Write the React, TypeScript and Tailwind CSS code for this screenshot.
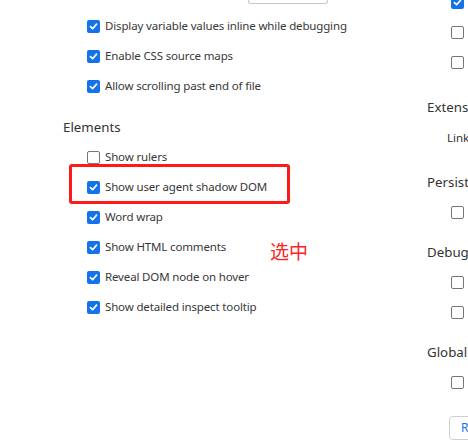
import React from "react";

function Box({ checked }: { checked: boolean }) {
  if (checked) {
    return (
      <span className="flex h-[13px] w-[13px] shrink-0 items-center justify-center rounded-[2px] bg-[#1273eb]">
        <svg width="9" height="9" viewBox="0 0 10 10">
          <path d="M1.6 5.2 L4 7.5 L8.4 2.4" fill="none" stroke="white" strokeWidth="1.9" strokeLinecap="round" strokeLinejoin="round" />
        </svg>
      </span>
    );
  }
  return <span className="h-[13px] w-[13px] shrink-0 rounded-[2px] border border-[#767676] bg-white" />;
}

function Row({ checked, label, children }: { checked: boolean; label: string; children?: React.ReactNode }) {
  return (
    <div className="relative flex h-[30px] items-center gap-[5px] pl-[24px]">
      <Box checked={checked} />
      <span className="text-[11.5px] tracking-[-0.15px] text-[#383838]">{label}</span>
      {children}
    </div>
  );
}

function RBox({ checked }: { checked: boolean }) {
  return (
    <div className="flex h-[30px] items-center pl-[24px]">
      <Box checked={checked} />
    </div>
  );
}

export default function App() {
  return (
    <div className="relative flex h-[440px] w-[468px] overflow-hidden bg-white" style={{ fontFamily: '"Noto Sans", "Noto Sans CJK SC", sans-serif' }}>
      <div className="relative flex w-[427px] shrink-0 flex-col pl-[63px]">
        <div className="ml-[185px] h-[4px] w-[80px] rounded-b-[3px] border-x border-b border-[#c8c8c8]" />
        <div className="mt-[7px]">
          <Row checked label="Display variable values inline while debugging" />
          <Row checked label="Enable CSS source maps" />
          <Row checked label="Allow scrolling past end of file" />
        </div>
        <div className="mt-[16px] mb-[5px] h-[20px] text-[13.3px] leading-[20px] text-[#333]">Elements</div>
        <Row checked={false} label="Show rulers" />
        <Row checked label="Show user agent shadow DOM">
          <div className="absolute left-[6px] top-[-8px] h-[40px] w-[221px] rounded-[3px] border-[3px] border-[#ff1a1a]" />
        </Row>
        <Row checked label="Word wrap" />
        <Row checked label="Show HTML comments" />
        <Row checked label="Reveal DOM node on hover" />
        <Row checked label="Show detailed inspect tooltip" />
        <div className="absolute left-[270px] top-[238px] text-[19px] leading-[26px] text-[#ff2222]" style={{ fontFamily: '"Noto Sans CJK SC", sans-serif' }}>选中</div>
      </div>
      <div className="flex flex-col text-[#333]">
        <div className="mt-[-13px]">
          <RBox checked />
          <RBox checked={false} />
          <RBox checked={false} />
        </div>
        <div className="mt-[20px] h-[20px] whitespace-nowrap text-[13.3px] leading-[20px]">Extensions</div>
        <div className="mt-[11px] h-[20px] pl-[20px] whitespace-nowrap text-[11.5px] leading-[20px]">Link handling</div>
        <div className="mt-[24px] h-[20px] whitespace-nowrap text-[13.3px] leading-[20px]">Persistence</div>
        <div className="mt-[5px]">
          <RBox checked={false} />
        </div>
        <div className="mt-[15px] h-[20px] whitespace-nowrap text-[13.3px] leading-[20px]">Debugger</div>
        <div className="mt-[5px]">
          <RBox checked={false} />
          <RBox checked={false} />
        </div>
        <div className="mt-[15px] h-[20px] whitespace-nowrap text-[13.3px] leading-[20px]">Global</div>
        <div className="mt-[5px]">
          <RBox checked={false} />
        </div>
        <div className="ml-[22px] mt-[19px] flex h-[28px] w-[80px] items-center rounded-[4px] border border-[#cfcfcf] pl-[11px] text-[12px] text-[#1a73e8]">
          Restore
        </div>
      </div>
    </div>
  );
}
